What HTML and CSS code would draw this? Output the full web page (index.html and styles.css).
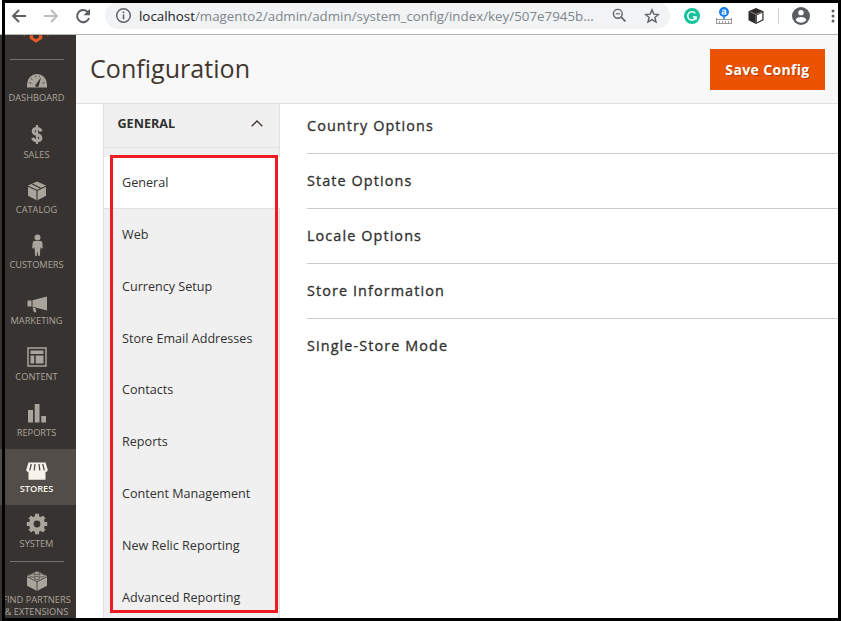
FILE: index.html
```
<!DOCTYPE html>
<html lang="en">
<head>
<meta charset="utf-8">
<title>Configuration</title>
<link rel="stylesheet" href="styles.css">
</head>
<body>
<div class="window">
  <header class="browser">
    <svg class="nav-icon" viewBox="0 0 16 16"><path d="M15 8H2M8 2L2 8l6 6" fill="none" stroke="#5a5d61" stroke-width="1.9"/></svg>
    <svg class="nav-icon" viewBox="0 0 16 16"><path d="M1 8h13M8 2l6 6-6 6" fill="none" stroke="#babcbe" stroke-width="1.9"/></svg>
    <svg class="nav-icon" viewBox="0 0 16 16"><path d="M13 4.3A6.1 6.1 0 1 0 14 10" fill="none" stroke="#5a5d61" stroke-width="2"/><path d="M15 .8v6.4H8.6z" fill="#5a5d61"/></svg>
    <div class="address">
      <svg class="info" viewBox="0 0 16 16"><circle cx="8" cy="8" r="6.4" fill="none" stroke="#5f6368" stroke-width="1.4"/><path d="M8 7v4.6M8 4.3v1.6" stroke="#5f6368" stroke-width="1.5"/></svg>
      <span class="url"><b>localhost</b>/magento2/admin/admin/system_config/index/key/507e7945b...</span>
      <svg class="lens" viewBox="0 0 16 16"><circle cx="6.2" cy="6.2" r="4.7" fill="none" stroke="#5f6368" stroke-width="1.5"/><path d="M9.8 9.8l4.5 4.5" stroke="#5f6368" stroke-width="1.8"/><path d="M4 6.2h4.5" stroke="#5f6368" stroke-width="1.2"/></svg>
      <svg class="star" viewBox="0 0 16 16"><path d="M8 1.9l1.8 4.2 4.6.4-3.5 3 1.1 4.5L8 11.600l-4 2.400 1.100-4.500-3.500-3 4.600-.4z" fill="none" stroke="#5f6368" stroke-width="1.4"/></svg>
    </div>
    <svg class="ext grammar" viewBox="0 0 16 16"><circle cx="8" cy="8" r="8" fill="#15c39a"/><path d="M11.300 5.300A4.200 4.200 0 1 0 12 9H8.800M12 8.300v3.500" fill="none" stroke="#fff" stroke-width="1.500"/></svg>
    <svg class="ext ruler" viewBox="0 0 16 18"><path d="M8 9v4" stroke="#1a7ee0" stroke-width="1.500"/><circle cx="8" cy="5" r="5" fill="#1680ee"/><path d="M6.200 3.500Q9.800 2 9.700 5v2.800M9.700 5.100Q6 4.600 6.200 6.300 6.700 8 9.700 6.500" fill="none" stroke="#fff" stroke-width="1.200"/><path d="M.5 11v6M15.500 11v6M.5 12.500h15M.5 16.500h15M3.500 16v-2M6.500 16v-2M9.500 16v-2M12.500 16v-2" stroke="#999" fill="none"/></svg>
    <svg class="ext cube" viewBox="0 0 16 16"><path d="M8 0l7.500 3.300v9L8 16 .5 12.300v-9z" fill="#2d2b29"/><path d="M9 7.300l5.300-2.600v6.900L9 14.300z" fill="#fff"/><path d="M2 3.800l6 2.600 6-2.600M8 6.500V15" fill="none" stroke="#aaa" stroke-width=".7"/></svg>
    <i class="bar"></i>
    <svg class="ext user" viewBox="0 0 16 16"><circle cx="8" cy="8" r="8" fill="#5a5d61"/><circle cx="8" cy="5" r="2.400" fill="#fff"/><path d="M3.200 11.500Q4 8.900 8 8.900t4.800 2.600Q11 14 8 14t-4.800-2.500z" fill="#fff"/></svg>
    <svg class="dots" viewBox="0 0 4 14"><g fill="#5a5d61"><circle cx="2" cy="2" r="1.500"/><circle cx="2" cy="7" r="1.500"/><circle cx="2" cy="12" r="1.500"/></g></svg>
  </header>
  <div class="app">
    <nav class="side">
      <div class="logo"><svg viewBox="0 0 28 8"><path d="M7 0v3.500L13.500 8l6.500-4.500V0h-3.500v2.500L13.500 4.200 10.500 2.500V0zM0 0l2 1.400V0zM27 0l-2 1.400V0z" fill="#ec5b24"/></svg></div>
      <a class="item first"><svg viewBox="0 0 22 22"><path d="M1 18.500v-3a10 10.500 0 0 1 20 0v3z"/><path d="M9.300 16L15 8.500 12.700 17a1.800 1.800 0 0 1-3.400-1z" fill="#373330"/><path d="M3.500 14h1.800M5 9.500l1.300 1M9.500 6.900l.4 1.400M16.500 14h2M13.500 7.200l-.4 1" stroke="#373330" stroke-width=".9"/></svg><span>DASHBOARD</span></a>
      <a class="item"><svg viewBox="0 0 22 22"><path d="M15.200 7.300Q14 4.500 11 4.500 7.200 4.500 7.200 7.300q0 2.300 3.800 3.200t3.900 3.500q0 2.700-3.900 2.700-3.500 0-4.400-2.900" fill="none" stroke="#aaa49c" stroke-width="3"/><path d="M11 1v19" stroke="#aaa49c" stroke-width="2.200"/></svg><span>SALES</span></a>
      <a class="item"><svg viewBox="0 0 22 22"><path d="M11 1.500l9 4v10.300L11 20.500l-9-4.700V5.500z"/><path d="M2 6.200L11 10.500l9-4.300M11 10.500v10M6.200 4l8.500 4.300" fill="none" stroke="#373330" stroke-width="1.100"/></svg><span>CATALOG</span></a>
      <a class="item tall"><svg viewBox="0 0 22 22"><circle cx="11.500" cy="3.400" r="3"/><path d="M8.500 7h6q1.700 0 1.900 2l.3 5-1.500.8-.7-1.800-.7 9h-1.500l-.8-5-.8 5H9.200L8.500 13l-.7 1.800-1.500-.8.3-5Q6.800 7 8.500 7z"/></svg><span>CUSTOMERS</span></a>
      <a class="item low"><svg viewBox="0 0 22 22"><path d="M1.500 7.500h4v6h-4zM6.500 7.200L21 3.500v14L6.500 13.800zM6.500 14.500l3 .8.800 4H8z"/></svg><span>MARKETING</span></a>
      <a class="item"><svg viewBox="0 0 22 22"><path d="M2 2h18v18H2z" fill="none" stroke="#aaa49c" stroke-width="1.500"/><path d="M4.500 4.500h13V8h-13zM4.500 9.500h3.700v8H4.500zM9.700 9.500h7.800v8H9.700z"/></svg><span>CONTENT</span></a>
      <a class="item"><svg viewBox="0 0 22 22"><path d="M2 8h5v12.500H2zM8.700 2h4.800v18.500H8.700zM15.300 14H20v6.500h-4.700z"/></svg><span>REPORTS</span></a>
      <a class="item low active"><svg viewBox="0 0 22 22"><path d="M2.500 2.500h17l2.300 7.500q-.3 2-2.300 2v7.800h-17V12q-2 0-2.300-2z"/><path d="M5.300 4L3.700 10.300M9 4l-.8 6.300M13 4l.8 6.300M16.700 4l1.600 6.300" stroke="#524d49" stroke-width="1.300"/></svg><span>STORES</span></a>
      <a class="item"><svg viewBox="0 0 22 22"><circle cx="11" cy="11" r="5.700" fill="none" stroke="#aaa49c" stroke-width="4.600"/><path d="M11 .8v4M11 17.200v4M.8 11h4M17.200 11h4M3.800 3.800l2.800 2.800M15.400 15.400l2.800 2.800M3.800 18.200l2.800-2.800M15.400 6.600l2.800-2.800" stroke="#aaa49c" stroke-width="4"/></svg><span>SYSTEM</span></a>
      <a class="item partners"><svg viewBox="0 0 22 22"><path d="M11 1l10 5v9.800L11 21 1 15.800V6z"/><path d="M1 6.700l10 5 10-5M11 11.500V21" fill="none" stroke="#373330" stroke-width=".8"/><g stroke="#373330" stroke-width=".6"><ellipse cx="11" cy="3" rx="2.800" ry="1.500"/><ellipse cx="6.200" cy="5.500" rx="2.800" ry="1.500"/><ellipse cx="15.800" cy="5.500" rx="2.800" ry="1.500"/><ellipse cx="11" cy="8" rx="2.800" ry="1.500"/></g></svg><span>FIND PARTNERS<br>&amp; EXTENSIONS</span></a>
    </nav>
    <main class="page">
      <div class="head"><h1>Configuration</h1><button class="save">Save Config</button></div>
      <div class="cols">
        <aside class="tabs">
          <div class="group"><span>GENERAL</span><svg viewBox="0 0 12 7"><path d="M.7 6.300L6 1l5.300 5.300" fill="none" stroke="#41362f" stroke-width="1.300"/></svg></div>
          <ul>
            <li class="current">General</li><li>Web</li><li>Currency Setup</li><li>Store Email Addresses</li><li>Contacts</li><li>Reports</li><li>Content Management</li><li>New Relic Reporting</li><li>Advanced Reporting</li>
          </ul>
        </aside>
        <section class="options">
          <h2>Country Options</h2><h2>State Options</h2><h2>Locale Options</h2><h2>Store Information</h2><h2>Single-Store Mode</h2>
        </section>
      </div>
    </main>
  </div>
  <div class="highlight"></div>
  <div class="frame"></div>
</div>
</body>
</html>
```
FILE: styles.css
```
* { box-sizing: border-box; }
body { margin: 0; font-family: "Open Sans", "Noto Sans", sans-serif; color: #303030; background: #fff; }
.window { position: relative; width: 841px; height: 621px; overflow: hidden; display: flex; flex-direction: column; }
.browser { flex: none; height: 35px; display: flex; align-items: center; padding: 0 0 3px 11px; border-bottom: 1px solid #b2b4b2; background: #fff; }
.nav-icon { width: 16px; height: 16px; margin-right: 16px; flex: none; }
.address { width: 565px; height: 27px; margin-left: -2px; background: #f1f3f4; border-radius: 14px; display: flex; align-items: center; padding-left: 9.500px; flex: none; }
.info { width: 17px; height: 17px; margin-right: 7.500px; flex: none; }
.url { width: 473px; font-size: 13.35px; white-space: nowrap; color: #80868b; }
.url b { font-weight: 400; color: #202124; }
.lens { width: 15px; height: 15px; margin-right: 17px; }
.star { width: 16px; height: 16px; }
.ext { flex: none; width: 16px; height: 16px; }
.grammar { margin-left: 14px; }
.ruler { height: 18px; margin-left: 16px; }
.cube { margin-left: 16px; }
.bar { width: 1px; height: 16px; background: #d0d2d4; margin: 0 13px 0 14px; }
.user { width: 18px; height: 18px; }
.dots { width: 4px; height: 14px; margin-left: 21px; flex: none; }
.app { flex: 1; min-height: 0; display: flex; }
.side { width: 76px; flex: none; background: #373330; display: flex; flex-direction: column; overflow: hidden; }
.logo { flex: none; height: 25px; margin: 0 12px 0 10px; border-bottom: 1px solid #736f6b; }
.logo svg { display: block; width: 27px; height: 8px; margin-left: 13px; }
.item { flex: none; height: 55.6px; display: flex; flex-direction: column; align-items: center; padding: 8.500px 3px 0 0; color: #aaa49c; font-size: 9.25px; line-height: 12px; text-align: center; }
.item svg { width: 22px; height: 22px; fill: #aaa49c; flex: none; }
.item span { margin-top: 2.500px; white-space: nowrap; }
.item.first span { margin-top: 1px; }
.item.low { padding-top: 10.5px; }
.item.low span { margin-top: 0; }
.item.tall { padding-top: 7px; }
.item.tall span { margin-top: 3px; }
.item.active { background: #524d49; color: #f7f3eb; font-weight: 600; }
.active svg { fill: #f7f3eb; }
.item.active span { margin-top: 1px; }
.item.partners { position: relative; height: 60px; padding-top: 9.500px; }
.partners::before { content: ""; position: absolute; left: 10px; top: 1px; width: 54px; height: 1px; background: #736f6b; }
.item.partners span { margin-top: 2.500px; }
.page { flex: 1; min-width: 0; display: flex; flex-direction: column; }
.head { height: 69px; flex: none; display: flex; align-items: center; justify-content: space-between; padding: 0 16px 0 14px; background: #f8f8f8; border-bottom: 1px solid #e0e0e0; }
h1 { margin: 0 0 2px; font-size: 25.1px; font-weight: 400; color: #41362f; }
.save { width: 115px; height: 41px; margin-top: 1px; padding: 0; border: 0; background: #eb5202; color: #fff; font: 700 14px "Open Sans", sans-serif; letter-spacing: .35px; text-shadow: 1px 1px 0 rgba(0, 0, 0, .25); }
.cols { flex: 1; min-height: 0; display: flex; padding-left: 27px; overflow: hidden; }
.tabs { width: 177px; flex: none; background: #f0f0f0; border: solid #e0e0e0; border-width: 0 1px; }
.group { height: 44px; display: flex; align-items: center; justify-content: space-between; padding: 0 16px 5px 13.5px; border-bottom: 1px solid #e0e0e0; font-size: 12.6px; font-weight: 700; }
.group svg { width: 12px; height: 7px; }
ul { list-style: none; margin: 9px 0 0; padding: 0; font-size: 12.6px; }
li { height: 51.85px; line-height: 51px; padding-left: 18px; }
.current { background: #fff; border-bottom: 1px solid #e0e0e0; margin-right: -1px; }
.options { flex: 1; padding-left: 27px; }
h2 { margin: 0; height: 55px; line-height: 54px; border-bottom: 1px solid #ccc; font-size: 14.4px; font-weight: 400; -webkit-text-stroke: .3px #303030; letter-spacing: 1.1px; }
h2:first-child { height: 50px; line-height: 44px; }
h2:last-child { border: 0; }
.highlight { position: absolute; left: 110px; top: 155px; width: 168px; height: 458px; border: 3px solid #ed1c24; }
.frame { position: absolute; left: 2px; top: 0; right: 0; bottom: 0; border: 3px solid #000; }
```
